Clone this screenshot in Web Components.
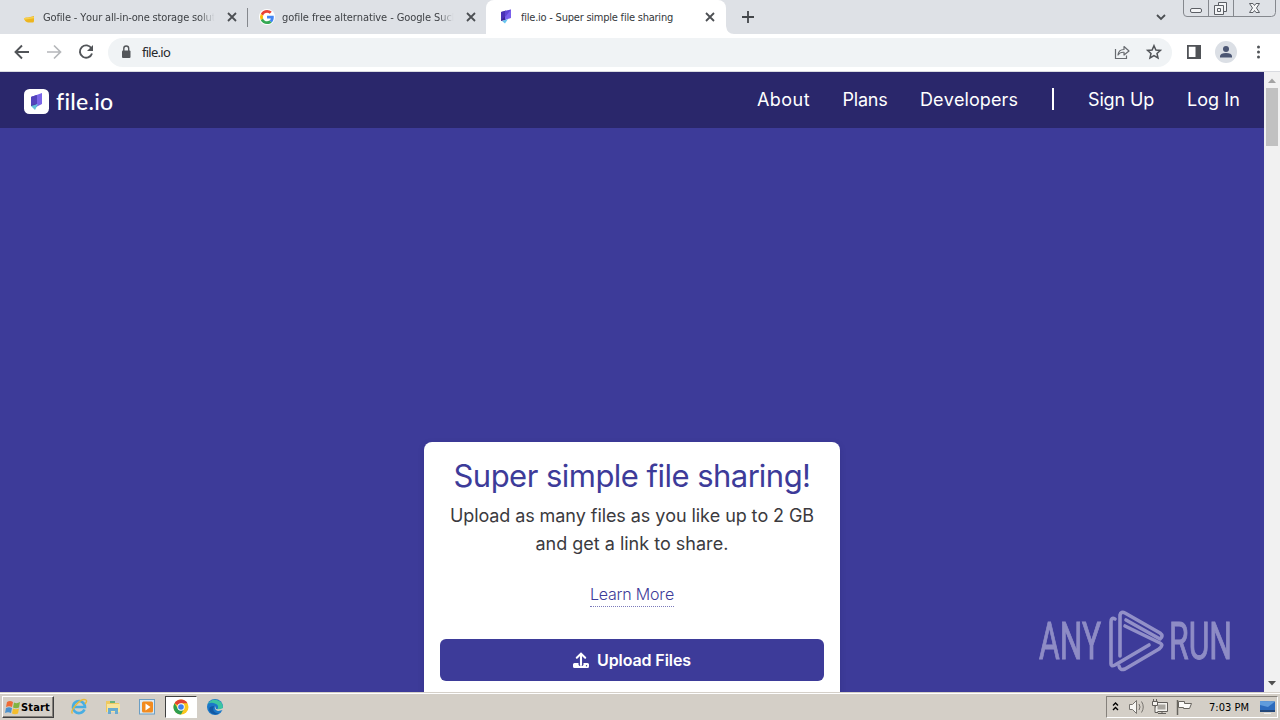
<!DOCTYPE html>
<html lang="en">
<head>
<meta charset="utf-8">
<title>file.io - Super simple file sharing</title>
<style>
  html, body {
    margin: 0;
    height: 100%;
    overflow: hidden;
  }
  body {
    display: flex;
    flex-direction: column;
    font-family: "DejaVu Sans Condensed", "DejaVu Sans", sans-serif;
    font-size: 11px;
    background: #3d3b99;
  }
  file-page {
    flex: 1;
    min-height: 0;
  }
</style>
</head>
<body>
<tab-strip>
  <browser-tab>
    <svg slot="icon" width="16" height="16"><path d="M4 9.500Q5 8 8 8.500L14 7V12Q14 14 12 13.500H8Q5 13 4 9.500Z" fill="#edb51f"/><path d="M4 10L14 8.500" stroke="#f7d04c" stroke-width="1.500"/></svg>
    <fit-text width="175">Gofile - Your all-in-one storage soluti</fit-text>
  </browser-tab>
  <browser-tab divider>
    <svg slot="icon" width="16" height="16" viewBox="0 0 48 48"><circle cx="24" cy="24" r="24" fill="#fff"/><g transform="translate(3 3) scale(.88)"><path fill="#EA4335" d="M24 9.500c3.540 0 6.710 1.220 9.210 3.600l6.850-6.850C35.900 2.380 30.470 0 24 0 14.620 0 6.510 5.380 2.560 13.220l7.980 6.190C12.430 13.720 17.740 9.500 24 9.500z"/><path fill="#4285F4" d="M46.980 24.550c0-1.570-.15-3.090-.38-4.550H24v9.020h12.940c-.58 2.960-2.260 5.480-4.780 7.180l7.730 6c4.510-4.180 7.090-10.360 7.090-17.650z"/><path fill="#FBBC05" d="M10.530 28.590A14.500 14.500 0 0 1 10.530 19.410l-7.980-6.190a24 24 0 0 0 0 21.560z"/><path fill="#34A853" d="M24 48c6.480 0 11.930-2.130 15.890-5.810l-7.730-6c-2.150 1.450-4.920 2.300-8.160 2.300-6.260 0-11.570-4.220-13.470-9.910l-7.980 6.190C6.510 42.620 14.620 48 24 48z"/></g></svg>
    <fit-text width="176">gofile free alternative - Google Such</fit-text>
  </browser-tab>
  <browser-tab active>
    <svg slot="icon" width="16" height="16"><path d="M3 3L8 1.500V11L3 12Z" fill="#3c2795"/><path d="M7 2L13 .5V9L7 11Z" fill="#7a60ec"/><path d="M3 3L13 .5L8 7L3 11Z" fill="#5139c7" opacity=".65"/><path d="M4 12L10 10L7 14.500Z" fill="#67c5ef"/></svg>
    <fit-text width="152">file.io - Super simple file sharing</fit-text>
  </browser-tab>
</tab-strip>
<tool-bar><fit-text width="28">file.io</fit-text></tool-bar>
<file-page>
  <site-header slot="header">
    <fit-text width="53">About</fit-text>
    <fit-text width="45">Plans</fit-text>
    <fit-text width="98">Developers</fit-text>
    <fit-text slot="account" width="66">Sign Up</fit-text>
    <fit-text slot="account" width="53">Log In</fit-text>
  </site-header>
  <upload-card>
    <fit-text slot="title" width="357">Super simple file sharing!</fit-text>
    <fit-text width="364">Upload as many files as you like up to 2 GB</fit-text>
    <fit-text width="193">and get a link to share.</fit-text>
    <fit-text slot="link" width="84">Learn More</fit-text>
    <fit-text slot="button" width="94">Upload Files</fit-text>
  </upload-card>
</file-page>
<task-bar></task-bar>

<script>
// Spreads its letters so that the line takes exactly the given width
class FitText extends HTMLElement {
  constructor() {
    super();
    this.attachShadow({mode: 'open'});
    this.shadowRoot.innerHTML = `
      <style>
        :host { display: inline-block; white-space: nowrap; font-kerning: none; font-variant-ligatures: none; }
        span { display: inline-block; }
      </style>
      <span><slot></slot></span>`;
  }
  connectedCallback() {
    const width = Number(this.getAttribute('width'));
    const span = this.shadowRoot.querySelector('span');
    requestAnimationFrame(() => {
      const natural = span.getBoundingClientRect().width;
      const count = this.textContent.length;
      span.style.letterSpacing = (width - natural) / count + 'px';
      this.style.width = width + 'px';
    });
  }
}

class BrowserTab extends HTMLElement {
  constructor() {
    super();
    this.attachShadow({mode: 'open'});
    this.shadowRoot.innerHTML = `
      <style>
        :host {
          display: flex;
          align-items: center;
          box-sizing: border-box;
          width: 239px;
          height: 34px;
          padding: 0 8px 0 12px;
          color: #3e4145;
        }
        :host([divider]) { background: linear-gradient(#85888d, #85888d) 0 50% / 1px 19px no-repeat; }
        :host([active]) {
          width: 240px;
          padding-right: 9px;
          background: #fff;
          border-radius: 8px 8px 0 0;
          color: #34373b;
        }
        .label {
          flex: 1;
          overflow: hidden;
          margin: 0 5px 0 7px;
          -webkit-mask-image: linear-gradient(90deg, #000 88%, transparent 97%);
        }
        :host([active]) .label { -webkit-mask-image: none; }
        .close { flex: none; }
      </style>
      <slot name="icon"></slot>
      <div class="label"><slot></slot></div>
      <svg class="close" width="14" height="14"><path d="M3 3L11 11M11 3L3 11" stroke="#4c4f53" stroke-width="1.800"/></svg>`;
  }
}

class TabStrip extends HTMLElement {
  constructor() {
    super();
    this.attachShadow({mode: 'open'});
    this.shadowRoot.innerHTML = `
      <style>
        :host {
          display: flex;
          align-items: flex-start;
          height: 34px;
          padding-left: 8px;
          background: #dee1e6;
        }
        .plus { margin: 9px 0 0 6px; }
        .spacer { flex: 1; }
        .arrow { margin: 12px 16px 0 0; }
      </style>
      <slot></slot>
      <svg width="8" height="34"><path d="M0 26Q1 34 8 34H0Z" fill="#fff"/></svg>
      <svg class="plus" width="16" height="16"><path d="M8 2V14M2 8H14" stroke="#43464a" stroke-width="1.800"/></svg>
      <div class="spacer"></div>
      <svg class="arrow" width="12" height="10"><path d="M2 3L6 7L10 3" fill="none" stroke="#4b4e52" stroke-width="1.800"/></svg>
      <svg width="97" height="18" fill="none">
        <path d="M.5 0V13Q.5 16.500 4 16.500H88.500Q92.500 16.500 92.500 12.500V0M25.500 0V16M50.500 0V16" stroke="#85888e"/>
        <g stroke="#5c5f65" fill="#f3f4f6">
          <rect x="7.500" y="8.500" width="11" height="4" rx="1.500"/>
          <path d="M35.500 2.500H43.500V11.500H35.500Z"/>
          <path d="M31.500 5.500H40.500V14.500H31.500ZM34.500 8.500H37.500V11.500H34.500Z"/>
          <path d="M66.500 3.500H70L71.500 5.500L73 3.500H76.500L73.500 8L76.500 12.500H73L71.500 10.500L70 12.500H66.500L69.500 8Z"/>
        </g>
      </svg>`;
  }
}

class ToolBar extends HTMLElement {
  constructor() {
    super();
    this.attachShadow({mode: 'open'});
    this.shadowRoot.innerHTML = `
      <style>
        :host {
          display: flex;
          align-items: center;
          box-sizing: border-box;
          height: 38px;
          padding: 0 10px 1px 10px;
          border-bottom: 1px solid #d9dbe0;
          background: #fff;
          color: #26282b;
          font-family: "Noto Sans", sans-serif;
          font-size: 13px;
        }
        svg { flex: none; }
        .nav { display: flex; gap: 8px; }
        .omnibox {
          flex: 1;
          display: flex;
          align-items: center;
          height: 29px;
          margin: 0 12px 0 10px;
          padding: 0 8px 0 10px;
          border-radius: 15px;
          background: #f0f3f5;
        }
        .address { flex: 1; padding-left: 8px; }
        .share { margin-right: 12px; }
        .tools { display: flex; align-items: center; gap: 11px; }
      </style>
      <div class="nav">
        <svg width="24" height="24" fill="none" stroke="#515458" stroke-width="1.900"><path d="M19 12H6M12 5.500L5.500 12L12 18.500"/></svg>
        <svg width="24" height="24" fill="none" stroke="#b5b7ba" stroke-width="1.700"><path d="M5 12H18M12 5.500L18.500 12L12 18.500"/></svg>
        <svg width="24" height="24" fill="none" stroke="#515458" stroke-width="1.900"><path d="M17.500 8.500A6.200 6.200 0 1 0 18 13.500"/><path d="M19 5V11H13Z" fill="#515458" stroke="none"/></svg>
      </div>
      <div class="omnibox">
        <svg width="16" height="16"><rect x="4" y="6.500" width="8.500" height="7.500" rx="1" fill="#53565a"/><path d="M5.800 7V4.500A2.450 2.450 0 0 1 10.700 4.500V7" fill="none" stroke="#53565a" stroke-width="1.400"/></svg>
        <div class="address"><slot></slot></div>
        <svg class="share" width="20" height="20" fill="none" stroke="#686b70" stroke-width="1.200"><path d="M3.500 7V16.500H14.500V13.500"/><path d="M6 13Q6.500 7.500 12 7.500V4.500L17 9L12 13V10.300Q8 10 6 13Z" stroke-linejoin="round"/></svg>
        <svg width="20" height="20" fill="none" stroke="#515458" stroke-width="1.500"><path d="M10 3.700L11.900 8L16.400 8.400L13 11.400L14 15.900L10 13.500L6 15.900L7 11.400L3.600 8.400L8.100 8Z"/></svg>
      </div>
      <div class="tools">
        <svg width="20" height="20"><path d="M3.900 3.900H16V16H3.900Z" fill="none" stroke="#505357" stroke-width="1.800"/><path d="M11.500 3H17V17H11.500Z" fill="#505357"/></svg>
        <svg width="22" height="22"><circle cx="11" cy="11" r="11" fill="#dbdfe5"/><circle cx="11" cy="8" r="3" fill="#4b5673"/><path d="M5 16.500V15Q5.500 12 11 12T17 15V16.500Z" fill="#4b5673"/></svg>
        <svg width="22" height="20" fill="#515458"><circle cx="10.500" cy="5" r="1.500"/><circle cx="10.500" cy="10" r="1.500"/><circle cx="10.500" cy="15" r="1.500"/></svg>
      </div>`;
  }
}

class SiteHeader extends HTMLElement {
  constructor() {
    super();
    this.attachShadow({mode: 'open'});
    this.shadowRoot.innerHTML = `
      <style>
        :host {
          display: flex;
          flex: none;
          align-items: center;
          box-sizing: border-box;
          height: 56px;
          padding: 0 24px 1px;
          background: #2a276b;
          color: #fff;
          font-size: 18px;
        }
        .logo { display: flex; flex: 1; align-items: center; padding-top: 3px; }
        .name { font: 500 23px/30px Lato, sans-serif; margin-left: 7px; }
        nav { display: flex; gap: 33px; }
        nav:first-of-type { gap: 32.500px; }
        .bar { width: 2px; height: 22px; margin: -1px 34px 0; background: #fff; }
      </style>
      <div class="logo">
        <svg width="25" height="25">
          <rect width="25" height="25" rx="5.500" fill="#fff"/>
          <path d="M7 8L13 6V18L7 17Z" fill="#453ba3"/>
          <path d="M7 8L18 4V15L12 18L12 12L7 13Z" fill="#7a65e8"/>
          <path d="M7 8L13 6V15L7 16Z" fill="#5343bb"/>
          <path d="M7 17L14 15L11 21Z" fill="#64c2d8"/>
        </svg>
        <fit-text class="name" width="57">file.io</fit-text>
      </div>
      <nav><slot></slot></nav>
      <div class="bar"></div>
      <nav><slot name="account"></slot></nav>`;
  }
}

class UploadCard extends HTMLElement {
  constructor() {
    super();
    this.attachShadow({mode: 'open'});
    this.shadowRoot.innerHTML = `
      <style>
        :host {
          display: flex;
          flex-direction: column;
          align-items: center;
          box-sizing: border-box;
          width: 416px;
          height: 300px;
          padding: 16px 16px 0;
          border-radius: 8px;
          background: #fff;
          box-shadow: 0 2px 6px rgba(30, 26, 90, .2);
          color: #3b3a3e;
        }
        .title { font-size: 31px; line-height: 36px; color: #3d3b99; }
        .text {
          display: flex;
          flex-direction: column;
          align-items: center;
          margin-top: 8px;
          font-size: 18px;
          line-height: 28px;
        }
        .link {
          margin-top: 24px;
          border-bottom: 1px dotted #7b7abb;
          font-size: 16px;
          font-weight: 300;
          line-height: 24px;
          color: #3d3b99;
        }
        .link, .title { display: flex; }
        .button {
          display: flex;
          align-items: center;
          justify-content: center;
          gap: 8px;
          align-self: stretch;
          height: 42px;
          margin-top: 32px;
          border-radius: 6px;
          background: #3d3b99;
          color: #fff;
          font-size: 16px;
          font-weight: 600;
        }
      </style>
      <div class="title"><slot name="title"></slot></div>
      <div class="text"><slot></slot></div>
      <div class="link"><slot name="link"></slot></div>
      <div class="button">
        <svg width="16" height="16" fill="none" stroke="#fff"><path d="M8 13V2.500M3.800 5.700L8 1.600L12.200 5.700" stroke-width="2.100" stroke-linecap="round"/><path d="M1.500 11H5.500V12.500Q5.500 14 8 14T10.500 12.500V11H14.500Q16 11 16 12.500V14.500Q16 16 14.500 16H1.500Q0 16 0 14.500V12.500Q0 11 1.500 11Z" fill="#fff" stroke="none"/><circle cx="13.500" cy="13.700" r=".7" fill="#3d3b99" stroke="none"/></svg>
        <slot name="button"></slot>
      </div>`;
  }
}

class FilePage extends HTMLElement {
  constructor() {
    super();
    this.attachShadow({mode: 'open'});
    this.shadowRoot.innerHTML = `
      <style>
        :host {
          display: flex;
          position: relative;
          overflow: hidden;
          font-family: Inter, "Liberation Sans", sans-serif;
        }
        .page { flex: 1; display: flex; flex-direction: column; }
        .content { display: flex; justify-content: center; padding-top: 314px; }
        .scroll {
          display: flex;
          flex-direction: column;
          align-items: center;
          width: 16px;
          background: #f1f1f1;
        }
        .thumb { width: 12px; height: 58px; background: #c1c1c1; }
        .scroll svg:last-child { margin-top: auto; }
        /* floats over the page, bottom right */
        .mark { position: absolute; right: 34px; bottom: 17px; overflow: visible; }
      </style>
      <div class="page">
        <slot name="header"></slot>
        <div class="content"><slot></slot></div>
      </div>
      <div class="scroll">
        <svg width="16" height="16"><path d="M4 11L8 6.500L12 11Z" fill="#a3a3a3"/></svg>
        <div class="thumb"></div>
        <svg width="16" height="17"><path d="M4 6L8 10.500L12 6Z" fill="#505050"/></svg>
      </div>
      <svg class="mark" width="210" height="70" opacity=".52" fill="#d9d7ee">
        <g stroke="#d9d7ee" stroke-width="1" font-family="Roboto" font-size="52">
          <text x="3" y="54" textLength="62" lengthAdjust="spacingAndGlyphs">ANY</text>
          <text x="133" y="54" textLength="63" lengthAdjust="spacingAndGlyphs">RUN</text>
        </g>
        <g fill="none" stroke="#e0def3" stroke-width="3.600" stroke-linejoin="round" stroke-linecap="round">
          <path d="M79 14Q75 12 75 17V59Q75 62 79 60L113 40"/>
          <path d="M84 51V10Q85 6 89 8L124 28Q128 31 124 34L90 15"/>
          <path d="M89 21L124 38Q128 40 123 44L89 64Q84 66 83 61"/>
        </g>
      </svg>`;
  }
}

class TaskBar extends HTMLElement {
  constructor() {
    super();
    this.attachShadow({mode: 'open'});
    this.shadowRoot.innerHTML = `
      <style>
        :host {
          display: flex;
          align-items: center;
          box-sizing: border-box;
          height: 28px;
          padding: 3px 2px 2px 2px;
          border-top: 1px solid #d5d0c9;
          box-shadow: inset 0 1px #fff;
          background: #d4cfc7;
          color: #000;
        }
        .start {
          display: flex;
          align-items: center;
          box-sizing: border-box;
          width: 52px;
          height: 22px;
          padding-left: 2px;
          border: 1px solid;
          border-color: #fff #404040 #404040 #fff;
          box-shadow: inset -1px -1px #85817b;
          font-weight: bold;
        }
        .apps { display: flex; flex: 1; align-items: center; padding-left: 9px; gap: 2px; }
        .app {
          display: flex;
          align-items: center;
          justify-content: center;
          box-sizing: border-box;
          width: 32px;
          height: 22px;
        }
        .app.on { background: #fff; border: 1px solid; border-color: #404040 #fff #fff #404040; }
        .tray {
          display: flex;
          align-items: center;
          box-sizing: border-box;
          width: 172px;
          height: 22px;
          padding: 0 1px 0 4px;
          border: 1px solid;
          border-color: #85817b #fff #fff #85817b;
        }
        .tray svg { flex: none; }
      </style>
      <div class="start">
        <svg width="16" height="17"><path d="M2 3Q5 1 8 3L7 8Q4 6.500 1 8Z" fill="#ef6b35"/><path d="M9 3.500Q12 5 15 3L14 8.500Q11 10 8 8.500Z" fill="#81b441"/><path d="M1 9Q4 7.500 7 9L6 14Q3 12.500 0 14Z" fill="#4b91cd"/><path d="M8 9.500Q11 11 14 9.500L13 14.500Q10 16 7 14.500Z" fill="#f4bd2c"/></svg>
        <fit-text width="29">Start</fit-text>
      </div>
      <div class="apps">
        <div class="app"><svg width="18" height="18" fill="none"><path d="M14.500 11.500A6 6 0 1 1 15 9H4.500" stroke="#48aee2" stroke-width="2.600"/><path d="M2.500 15.500C-1 13 11-1 16 2Q17.500 3 15 6" stroke="#e8b93a" stroke-width="1.400"/></svg></div>
        <div class="app"><svg width="18" height="18"><path d="M2 3H7L8 5H15V14H2Z" fill="#eec95f"/><path d="M3 6H16V14H3Z" fill="#f8e49c"/><path d="M4 10H14V16H11V13H7V16H4Z" fill="#69abd0"/><path d="M6 3H11V5H6Z" fill="#68b27a"/></svg></div>
        <div class="app"><svg width="18" height="18"><rect x="1.500" y="1.500" width="15" height="14.500" fill="#dceaf4" stroke="#6b9ec3"/><rect x="4" y="3.500" width="11" height="11" rx="1.500" fill="#f28b1f"/><path d="M7.500 5.500V12.500L12.500 9Z" fill="#fff"/></svg></div>
        <div class="app on"><svg width="16" height="16"><circle cx="8" cy="8" r="7.500" fill="#fbc71e"/><path d="M8 8L1.500 4.250A7.500 7.500 0 0 1 14.500 4.250H8Z" fill="#e24334"/><path d="M1.500 4.250A7.500 7.500 0 0 0 8 15.500L11 9.700H5Z" fill="#2e9e50"/><circle cx="8" cy="8" r="3.700" fill="#fff"/><circle cx="8" cy="8" r="2.800" fill="#4080ee"/></svg></div>
        <div class="app"><svg width="18" height="18"><circle cx="9" cy="9" r="8" fill="#1b78c8"/><path d="M2 6A8 8 0 0 1 17 9Q16 13 11 12Q14 7 9 5.500Q5 4 2 6Z" fill="#3cc5a2"/><path d="M8 8Q5 15 13 15.500Q8 18 4 14Q1 8 8 8Z" fill="#1259a4"/><path d="M9 8Q8 12 12 13L17 12V10Q14 12 10 11Z" fill="#d4cfc7"/></svg></div>
      </div>
      <div class="tray">
        <svg width="10" height="14" fill="none" stroke="#000" stroke-width="1.400"><path d="M2 5.500L4.500 3L7 5.500M2 10L4.500 7.500L7 10"/></svg>
        <svg width="24" height="18" fill="none" stroke="#77746f"><path d="M8.500 6.500H11.500L15.500 2.500V15.500L11.500 11.500H8.500Z" fill="#f7f6f3"/><path d="M18 6Q20 9 18 12M20.500 3.500Q24 9 20.500 14.500"/></svg>
        <svg width="24" height="18" fill="none" stroke="#625f5b"><path d="M10.500 4.500H22.500V13.500H10.500Z" fill="#f4f2ee"/><path d="M12.500 6.500H20.500V11.500H12.500Z" fill="#a9a6a0" stroke="none"/><path d="M13 15.500H21M17 13V16"/><path d="M8.500 1V4M11.500 1V4M10 8V14.500H13M7.500 3.500H12.500V7.500H7.500Z" fill="#f4f2ee"/></svg>
        <svg width="24" height="18" stroke="#68655f"><path d="M8.500 2V17" stroke-width="1.500"/><path d="M9.500 3.500H15.500V5.500H22.500L20.500 10.500H14.500V9.500H9.500Z" fill="#fbfaf8"/></svg>
        <fit-text width="40" style="margin-left:16px">7:03 PM</fit-text>
        <svg width="17" height="18" style="margin-left:auto"><path d="M1 3L16 3.500V14H1Z" fill="#2d6bbd"/><path d="M1 3L16 3.500L9 9L1 7Z" fill="#609cdc"/><path d="M1 12H16V14H1Z" fill="#234779"/><path d="M5 15H12V16H5Z" fill="#eee"/></svg>
      </div>`;
  }
}

customElements.define('fit-text', FitText);
customElements.define('browser-tab', BrowserTab);
customElements.define('tab-strip', TabStrip);
customElements.define('tool-bar', ToolBar);
customElements.define('site-header', SiteHeader);
customElements.define('upload-card', UploadCard);
customElements.define('file-page', FilePage);
customElements.define('task-bar', TaskBar);
</script>
</body>
</html>
